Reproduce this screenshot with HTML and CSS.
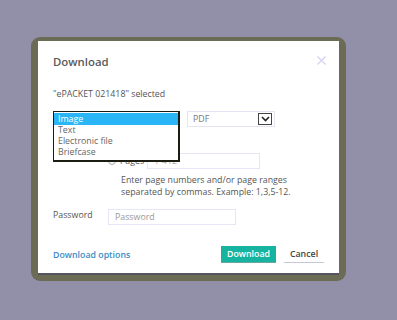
FILE: index.html
```html
<!DOCTYPE html>
<html lang="en">
<head>
  <meta charset="UTF-8">
  <meta name="viewport" content="width=device-width, initial-scale=1.0">
  <title>Download</title>
  <link rel="stylesheet" href="styles.css">
</head>
<body>
  <div class="frame">
    <div class="dialog">
      <div class="header">
        <h1>Download</h1>
        <span class="close">
          <svg width="9" height="9" viewBox="0 0 9 9"><path d="M0.5 0.5l8 8M8.5 0.5l-8 8" stroke="#d2d2ee" stroke-width="1.2"/></svg>
        </span>
      </div>
      <p class="selected">"ePACKET 021418" selected</p>
      <div class="format-row">
        <div class="format-select">
          <div class="select-box">Image</div>
          <ul class="listbox">
            <li class="active">Image</li>
            <li>Text</li>
            <li>Electronic file</li>
            <li>Briefcase</li>
          </ul>
        </div>
        <div class="select-box pdf">
          <span>PDF</span>
          <span class="arrow">
            <svg width="9" height="6" viewBox="0 0 9 6"><path d="M1 1l3.5 3.5L8 1" fill="none" stroke="#222" stroke-width="1.6"/></svg>
          </span>
        </div>
      </div>
      <div class="range">
        <label class="radio-row"><span class="radio checked"></span>All pages</label>
        <div class="radio-row">
          <span class="radio"></span>
          <span class="radio-label">Pages</span>
          <input type="text" class="field pages" value="1-412">
        </div>
        <p class="help">Enter page numbers and/or page ranges<br>separated by commas. Example: 1,3,5-12.</p>
      </div>
      <div class="password-row">
        <label for="password">Password</label>
        <input type="password" id="password" class="field password" placeholder="Password">
      </div>
      <div class="footer">
        <a class="options" href="#">Download options</a>
        <div class="buttons">
          <button class="primary">Download</button>
          <button class="cancel">Cancel</button>
        </div>
      </div>
    </div>
  </div>
</body>
</html>
```

FILE: styles.css
```css
body {
  font-family: 'Open Sans', 'Noto Sans', sans-serif;
  margin: 0;
  padding: 37px 0 0 31px;
  background-color: #9190a8;
  height: 320px;
  box-sizing: border-box;
  overflow: hidden;
  color: #555;
  font-size: 8.8px;
}
.frame {
  width: 301px;
  padding: 4px 7px 8px 7px;
  background: #6c6b55;
  border-radius: 9px;
}
.dialog {
  background: white;
  height: 232px;
  box-sizing: border-box;
  padding: 12px 15px 0 15px;
  box-shadow: 0 2px 0 #55555f;
}
.header {
  display: flex;
  justify-content: space-between;
  align-items: center;
  height: 17px;
}
h1 {
  margin: 0;
  font-size: 11.4px;
  font-weight: 600;
  color: #5a5a5a;
}
.close {
  display: flex;
  margin-top: -2px;
  margin-right: -2px;
}
.selected {
  margin: 18px 0 0;
  line-height: 12px;
}
.format-row {
  display: flex;
  gap: 7px;
  margin-top: 11px;
}
.format-select {
  position: relative;
  width: 127px;
}
.select-box {
  height: 16px;
  box-sizing: border-box;
  border: 1px solid #e4e4f4;
  padding: 0 5px;
  display: flex;
  align-items: center;
  justify-content: space-between;
}
.select-box.pdf {
  width: 88px;
  padding-right: 2px;
  color: #777;
}
.arrow {
  width: 12px;
  height: 10px;
  border: 1px solid #444;
  display: flex;
  align-items: center;
  justify-content: center;
  background: #fff;
}
.listbox {
  position: absolute;
  top: 0;
  left: 0;
  width: 127px;
  box-sizing: border-box;
  margin: 0;
  padding: 1px 0 2px;
  list-style: none;
  background: white;
  border: 1px solid #1c1c10;
  border-width: 1px 2px 2px 1px;
  color: #666;
}
.listbox li {
  height: 11px;
  line-height: 11px;
  padding: 0 4px;
}
.listbox li.active {
  background: #2ab6f6;
  color: white;
  height: 12px;
  line-height: 12px;
}
.range {
  padding-left: 55px;
}
.radio-row {
  display: flex;
  align-items: center;
  gap: 4px;
  height: 16px;
  margin-top: 5px;
}
.radio {
  width: 6px;
  height: 6px;
  border: 1px solid #aaa;
  border-radius: 50%;
}
.radio-label {
  width: 23px;
}
.field {
  font-family: inherit;
  font-size: 8.8px;
  height: 16px;
  box-sizing: border-box;
  border: 1px solid #e6e6fa;
  padding: 0 6px;
  outline: none;
  color: #aaa;
}
.field::placeholder {
  color: #999;
}
.pages {
  width: 113px;
}
.help {
  margin: 5px 0 0 13px;
  line-height: 12px;
  color: #555;
}
.password-row {
  display: flex;
  align-items: center;
  margin-top: 11px;
}
.password-row label {
  width: 55px;
  margin-top: -4px;
}
.password {
  width: 128px;
}
.footer {
  display: flex;
  justify-content: space-between;
  align-items: center;
  margin-top: 21px;
}
.options {
  color: #3b8cc6;
  font-weight: 600;
  text-decoration: none;
}
.buttons {
  display: flex;
  gap: 8px;
}
button {
  font-family: inherit;
  font-size: 8.8px;
  font-weight: 600;
  height: 16px;
  border: none;
  padding: 0;
  cursor: pointer;
}
.primary {
  width: 55px;
  background-color: #17b3a1;
  color: white;
  box-shadow: 0 1px 0 #6aa79f;
}
.cancel {
  width: 40px;
  background: white;
  color: #444;
  border-bottom: 1px solid #c8c8d4;
  height: 17px;
}
```
